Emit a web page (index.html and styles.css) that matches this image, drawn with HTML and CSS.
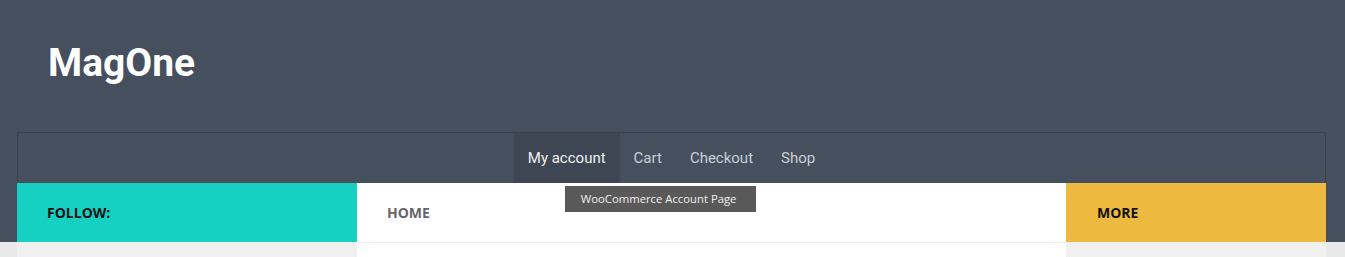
FILE: index.html
```html
<!DOCTYPE html>
<html>
<head>
<meta charset="utf-8">
<link rel="stylesheet" href="styles.css">
</head>
<body>
<header class="site-header">
  <div class="logo">MagOne</div>
  <div class="wrap">
    <nav class="main-nav">
      <ul class="menu">
        <li class="menu-item active">
          <a href="#">My account</a>
          <span class="tooltip">WooCommerce Account Page</span>
        </li>
        <li class="menu-item"><a href="#">Cart</a></li>
        <li class="menu-item"><a href="#">Checkout</a></li>
        <li class="menu-item"><a href="#">Shop</a></li>
      </ul>
    </nav>
    <div class="sub-bar">
      <div class="col col-follow">FOLLOW:</div>
      <div class="col col-home">HOME</div>
      <div class="col col-more">MORE</div>
    </div>
  </div>
</header>
<div class="wrap content">
  <div class="side side-left"></div>
  <div class="main"></div>
  <div class="side side-right"></div>
</div>
</body>
</html>
```

FILE: styles.css
```css
* { box-sizing: border-box; }
html, body { margin: 0; padding: 0; }
body {
  background: #e9e9e9;
  font-family: "Open Sans", "Liberation Sans", sans-serif;
  overflow: hidden;
}
.site-header {
  background: #454f5e;
}
.logo {
  font-family: Roboto, "Liberation Sans", sans-serif;
  font-weight: 700;
  font-size: 39px;
  line-height: 39px;
  color: #ffffff;
  padding: 44px 0 49px 48px;
  height: 132px;
}
.wrap {
  margin-left: 17px;
  width: 1309px;
}
.main-nav {
  border: 1px solid #39414d;
  border-bottom: none;
  height: 51px;
}
.menu {
  list-style: none;
  margin: 0;
  padding: 0;
  display: flex;
  justify-content: center;
  height: 50px;
}
.menu-item {
  position: relative;
  height: 50px;
}
.menu-item a {
  display: block;
  height: 50px;
  line-height: 50px;
  padding: 0 14px;
  font-family: Roboto, "Liberation Sans", sans-serif;
  font-size: 15px;
  color: #c9ced5;
  text-decoration: none;
}
.menu-item.active a {
  background: #3e4653;
  color: #f2f2f2;
}
.tooltip {
  position: absolute;
  left: 51px;
  top: 53px;
  width: 191px;
  height: 26px;
  line-height: 26px;
  padding-left: 16px;
  background: #595959;
  color: #f0f0f0;
  font-size: 11.3px;
  white-space: nowrap;
  z-index: 2;
}
.sub-bar {
  display: flex;
  height: 59px;
}
.col {
  display: flex;
  align-items: center;
  padding-left: 30px;
  font-weight: 700;
  font-size: 14px;
}
.col-follow {
  width: 340px;
  background: #16d0c1;
  color: #111;
}
.col-home {
  flex: 1;
  background: #ffffff;
  color: #666;
}
.col-more {
  width: 260px;
  background: #eeb93f;
  color: #111;
  padding-left: 31px;
}
.content {
  display: flex;
  height: 60px;
}
.side-left { width: 340px; background: #f0f0f0; }
.main { flex: 1; background: #fff; border-top: 1px solid #ececec; }
.side-right { width: 260px; background: #f0f0f0; }
```
